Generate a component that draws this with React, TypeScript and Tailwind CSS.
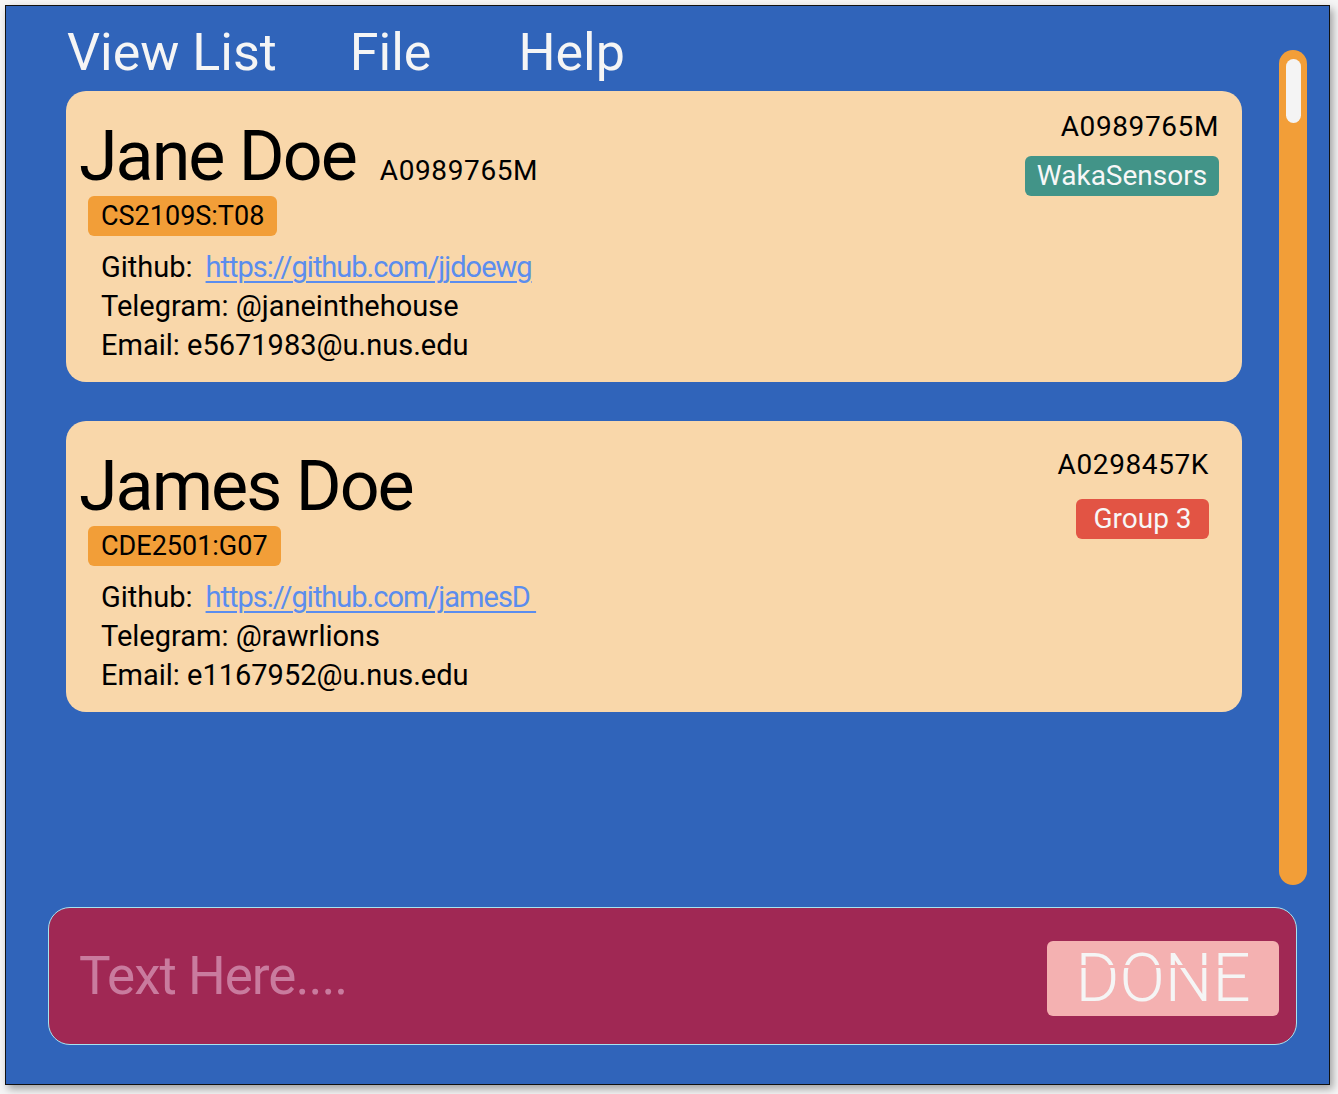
import React from "react";

type Person = {
  name: string;
  matric: string;
  tutorial: string;
  github: string;
  telegram: string;
  email: string;
  group: string;
  groupColor: string;
  groupWidth: string;
  rightPad: string;
  rightTop: string;
  rightGap: string;
  inlineMatric: boolean;
};

const people: Person[] = [
  {
    name: "Jane Doe",
    matric: "A0989765M",
    tutorial: "CS2109S:T08",
    github: "https://github.com/jjdoewg",
    telegram: "@janeinthehouse",
    email: "e5671983@u.nus.edu",
    group: "WakaSensors",
    groupColor: "bg-[#429488]",
    groupWidth: "w-[194px]",
    rightPad: "pr-[23px]",
    rightTop: "pt-[22px]",
    rightGap: "mt-[15px]",
    inlineMatric: true,
  },
  {
    name: "James Doe",
    matric: "A0298457K",
    tutorial: "CDE2501:G07",
    github: "https://github.com/jamesD ",
    telegram: "@rawrlions",
    email: "e1167952@u.nus.edu",
    group: "Group 3",
    groupColor: "bg-[#e25444]",
    groupWidth: "w-[133px]",
    rightPad: "pr-[33px]",
    rightTop: "pt-[30px]",
    rightGap: "mt-[20px]",
    inlineMatric: false,
  },
];

function PersonCard({ p }: { p: Person }) {
  return (
    <article className="flex h-[291px] justify-between rounded-[20px] bg-[#f9d7aa]">
      {/* left column */}
      <div className="flex flex-col pl-[13px] pt-[30px]">
        <div className="flex items-baseline">
          <h2 className="text-[70px] leading-none tracking-[-2px] text-black">{p.name}</h2>
          {p.inlineMatric && (
            <span className="ml-[24px] text-[28px] leading-none tracking-[0.6px] text-black">{p.matric}</span>
          )}
        </div>
        <div className="ml-[9px] mt-[5px] flex h-[40px] w-fit items-center rounded-[6px] bg-[#f29e38] px-[13px] text-[27px] leading-none text-black">
          {p.tutorial}
        </div>
        <div className="ml-[22px] mt-[12px] text-[29px] leading-[39px] text-black">
          <p>
            Github:
            <a
              href="#"
              className="ml-[13px] whitespace-pre tracking-[-1px] text-[#5b8dee] underline decoration-[1.5px] underline-offset-[4px]"
            >
              {p.github}
            </a>
          </p>
          <p>Telegram: {p.telegram}</p>
          <p>Email: {p.email}</p>
        </div>
      </div>

      {/* right column */}
      <div className={`flex flex-col items-end ${p.rightPad} ${p.rightTop}`}>
        <span className="text-[28px] leading-none tracking-[0.6px] text-black">{p.matric}</span>
        <span
          className={`${p.rightGap} flex h-[40px] ${p.groupWidth} items-center justify-center rounded-[6px] ${p.groupColor} text-[28px] leading-none text-[#f7f7f7]`}
        >
          {p.group}
        </span>
      </div>
    </article>
  );
}

export default function App() {
  return (
    <div className="h-[1094px] w-[1338px] bg-[#f5f5f5] pl-[5px] pt-[5px] font-['Roboto',sans-serif]">
      <div className="h-[1080px] w-[1325px] border border-[#111] bg-[#3064ba] shadow-[3px_4px_8px_rgba(0,0,0,0.35)]">
        <div className="flex h-[901px]">
          <div className="ml-[60px] w-[1176px]">
            <nav className="flex h-[85px] pl-[1px] pt-[21px] text-[52px] leading-none text-[#f5f5f5]">
              <span>View List</span>
              <span className="ml-[73px]">File</span>
              <span className="ml-[87px]">Help</span>
            </nav>
            <div className="flex flex-col gap-[39px]">
              {people.map((p) => (
                <PersonCard key={p.matric} p={p} />
              ))}
            </div>
          </div>

          {/* scrollbar */}
          <div className="ml-[37px] mt-[44px] h-[835px] w-[28px] rounded-full bg-[#f29e38] px-[7px] pt-[9px]">
            <div className="h-[64px] w-[15px] rounded-full bg-[#f4f4f4]" />
          </div>
        </div>

        <div className="ml-[42px] flex h-[138px] w-[1249px] items-start justify-between rounded-[22px] border-[1.5px] border-[#a6e4ef] bg-[#a02854]">
          <span className="ml-[30px] mt-[42px] text-[53px] leading-none tracking-[-1px] text-[#c97b9e]">Text Here....</span>
          <button className="relative mr-[17px] mt-[33px] flex h-[75px] w-[232px] items-center justify-center rounded-[6px] bg-[#f4b1b1] text-[67px] font-light leading-none text-[#f5f5f5]">
            DONE
            <span className="absolute left-[20px] right-[20px] top-[24px] h-[3px] bg-[#f4b1b1]" />
          </button>
        </div>
      </div>
    </div>
  );
}
